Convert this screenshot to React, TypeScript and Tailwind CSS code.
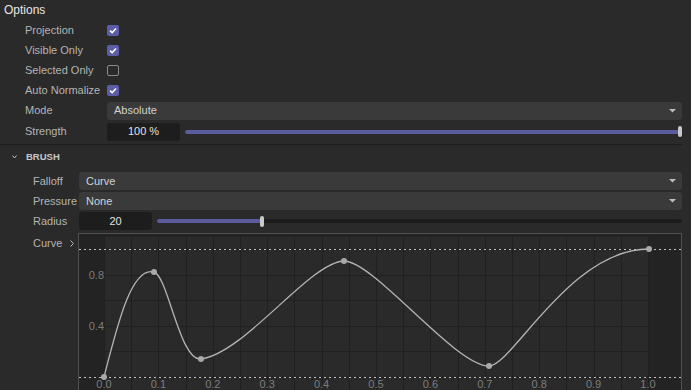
const font = { fontFamily: '"Liberation Sans", Arial, sans-serif' };

const Checkbox = ({ checked }: { checked: boolean }) =>
  checked ? (
    <div className="flex h-[11px] w-[12px] items-center justify-center rounded-[2px] bg-[#5b5ea6]">
      <svg width="10" height="9" viewBox="0 0 10 9">
        <polyline points="2,4.6 4.2,6.6 8,2.4" fill="none" stroke="#ffffff" strokeWidth="1.5" />
      </svg>
    </div>
  ) : (
    <div className="h-[11px] w-[12px] rounded-[2px] border border-[#8a8a8a]" />
  );

const Dropdown = ({ value }: { value: string }) => (
  <div className="flex h-[18px] flex-1 items-center justify-between rounded-[3px] bg-[#3a3a3a] pl-[7px] pr-[6px] text-[11px] text-[#d2d2d2]">
    <span>{value}</span>
    <svg width="7" height="4" viewBox="0 0 7 4">
      <polygon points="0,0 7,0 3.5,3.5" fill="#bdbdbd" />
    </svg>
  </div>
);

const Slider = ({ value, fill }: { value: string; fill: string }) => (
  <div className="flex flex-1 items-center gap-[5px]">
    <div className="flex h-[18px] w-[73px] items-center justify-center rounded-[3px] bg-[#1d1d1d] text-[11px] text-[#e2e2e2]">
      {value}
    </div>
    <div className="relative flex h-[12px] flex-1 items-center">
      <div className="h-[4px] w-full rounded-full bg-[#1c1c1c]" />
      <div className={`absolute left-0 h-[4px] rounded-l-full bg-[#5a5c9e] ${fill}`} />
      <div
        className="absolute h-[11px] w-[4px] -translate-x-1/2 rounded-full bg-[#c9c9c9]"
        style={{ left: fill === "w-full" ? "calc(100% - 2px)" : "20%" }}
      />
    </div>
  </div>
);

const TopRow = ({ label, children, h = "h-[20px]" }: { label: string; children: React.ReactNode; h?: string }) => (
  <div className={`flex ${h} items-center pl-[25px] pr-[9px]`}>
    <span className="w-[82px] text-[11px] text-[#b4b4b4]">{label}</span>
    {children}
  </div>
);

const BrushRow = ({ label, children }: { label: string; children: React.ReactNode }) => (
  <div className="flex h-[18px] items-center pl-[33px] pr-[9px]">
    <span className="w-[46px] text-[11px] text-[#b4b4b4]">{label}</span>
    {children}
  </div>
);

const CurveChart = () => {
  const x0 = 104;
  const x1 = 648;
  const y1 = 249;
  const y0 = 377;
  const vLines = Array.from({ length: 21 }, (_, i) => Math.round(x0 + i * 27.2) + 0.5);
  const hLines = Array.from({ length: 6 }, (_, i) => Math.round(y1 + i * 25.6) + 0.5);
  const xLabels = ["0.0", "0.1", "0.2", "0.3", "0.4", "0.5", "0.6", "0.7", "0.8", "0.9", "1.0"];
  const points = [
    [104, 377],
    [154, 272],
    [201, 359],
    [344, 261],
    [489, 366],
    [649, 249],
  ];
  const d =
    "M104 377 C118 322 132 266 154 272 " +
    "C168 276 180 362 201 359 " +
    "C245 353 310 262 344 261 " +
    "C374 261 455 366 489 366 " +
    "C512 366 570 249 649 249";

  return (
    <div className="h-[170px] flex-1 border border-[#505050] bg-[#232323]">
      <svg width="602" height="168" viewBox="0 0 602 168" className="block">
        <g transform="translate(-79 -234)">
          <rect x={x0} y={237} width={x1 - x0} height={200} fill="#2a2a2a" />
          {vLines.map((x) => (
            <line key={x} x1={x} y1={237} x2={x} y2={400} stroke="#202020" strokeWidth="1" />
          ))}
          {hLines.map((y) => (
            <line key={y} x1={x0} y1={y} x2={x1} y2={y} stroke="#202020" strokeWidth="1" />
          ))}
          <line x1={79} y1={249.5} x2={681} y2={249.5} stroke="#c4c4c4" strokeWidth="1" strokeDasharray="2 3" />
          <line x1={79} y1={377.5} x2={681} y2={377.5} stroke="#c4c4c4" strokeWidth="1" strokeDasharray="2 3" />
          <path d={d} fill="none" stroke="#b4b4b4" strokeWidth="1.3" />
          {points.map(([x, y]) => (
            <circle key={x} cx={x} cy={y} r="3" fill="#a9a9a9" />
          ))}
          <g fill="#7c7c7c" fontSize="11" style={font}>
            <text x={104} y={279} textAnchor="end">0.8</text>
            <text x={104} y={330} textAnchor="end">0.4</text>
            {xLabels.map((t, i) => (
              <text key={t} x={x0 + i * 54.4} y={388} textAnchor="middle">
                {t}
              </text>
            ))}
          </g>
        </g>
      </svg>
    </div>
  );
};

export default function App() {
  return (
    <div className="h-[390px] w-[691px] overflow-hidden bg-[#2a2a2a]" style={font}>
      <div className="flex h-[20px] items-center pl-[4px] text-[12px] text-[#e6e6e6]">Options</div>
      <TopRow label="Projection">
        <Checkbox checked />
      </TopRow>
      <TopRow label="Visible Only">
        <Checkbox checked />
      </TopRow>
      <TopRow label="Selected Only">
        <Checkbox checked={false} />
      </TopRow>
      <TopRow label="Auto Normalize">
        <Checkbox checked />
      </TopRow>
      <TopRow label="Mode" h="h-[21px]">
        <Dropdown value="Absolute" />
      </TopRow>
      <TopRow label="Strength" h="h-[21px]">
        <Slider value="100 %" fill="w-full" />
      </TopRow>
      <div className="mr-[9px] mt-[2px] h-px bg-[#1e1e1e]" />

      <div className="flex h-[24px] items-center gap-[9px] pl-[12px]">
        <svg width="5" height="4" viewBox="0 0 5 4">
          <polyline points="0.5,0.5 2.5,3 4.5,0.5" fill="none" stroke="#bdbdbd" strokeWidth="1" />
        </svg>
        <span className="text-[9.5px] font-bold text-[#c8c8c8]">BRUSH</span>
      </div>

      <div className="flex flex-col gap-[2px] pt-[3px]">
        <BrushRow label="Falloff">
          <Dropdown value="Curve" />
        </BrushRow>
        <BrushRow label="Pressure">
          <Dropdown value="None" />
        </BrushRow>
        <BrushRow label="Radius">
          <Slider value="20" fill="w-[20%]" />
        </BrushRow>
      </div>

      <div className="mt-[3px] flex pl-[33px] pr-[9px]">
        <div className="flex h-[20px] w-[45px] items-center justify-between pr-[3px]">
          <span className="text-[11px] text-[#b4b4b4]">Curve</span>
          <svg width="5" height="7" viewBox="0 0 5 7">
            <polyline points="0.5,0.5 3.5,3.5 0.5,6.5" fill="none" stroke="#bdbdbd" strokeWidth="1" />
          </svg>
        </div>
        <CurveChart />
      </div>
    </div>
  );
}
